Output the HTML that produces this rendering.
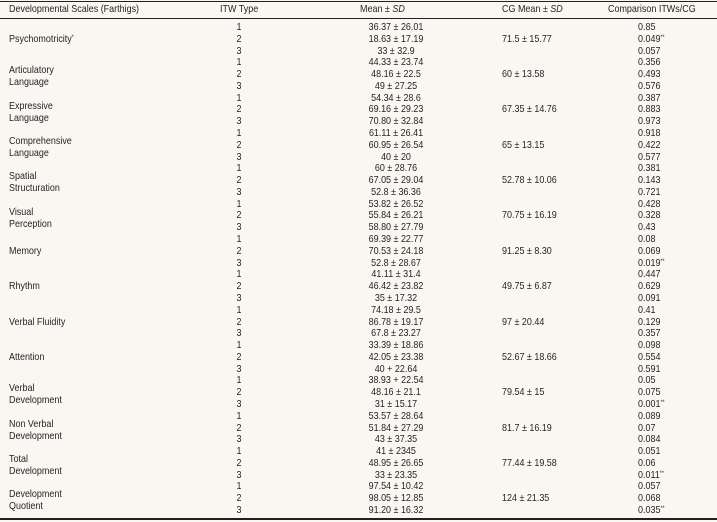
<!DOCTYPE html>
<html><head><meta charset="utf-8"><style>
*{margin:0;padding:0;box-sizing:border-box}
body{width:717px;height:522px;background:#f9f7f2;color:#231f20;font-family:"Liberation Sans Narrow","Liberation Sans",sans-serif;font-size:10.2px;position:relative;overflow:hidden}
.hl{position:absolute;left:0;width:717px;background:#231f20}
.t{position:absolute;white-space:nowrap;line-height:12px;transform:scaleX(.88);transform-origin:left center}
.c{transform:translateX(-50%) scaleX(.88);transform-origin:center center}
sup{font-size:6px;vertical-align:top;position:relative;top:-2px}
</style></head><body>
<div class="hl" style="top:1px;height:1px"></div>
<div class="hl" style="top:18px;height:1px"></div>
<div class="hl" style="top:518px;height:2px"></div>
<div class="t" style="left:9px;top:4px">Developmental Scales (Farthigs)</div>
<div class="t" style="left:220px;top:4px">ITW Type</div>
<div class="t" style="left:360px;top:4px">Mean ± <i>SD</i></div>
<div class="t" style="left:502px;top:4px">CG Mean ± <i>SD</i></div>
<div class="t" style="left:608px;top:4px">Comparison ITWs/CG</div>
<div id="rows"></div>
<script>
var g=[
["Psychomotricity<sup>*</sup>",["36.37 ± 26.01","18.63 ± 17.19","33 ± 32.9"],"71.5 ± 15.77",["0.85","0.049<sup>**</sup>","0.057"]],
["Articulatory<br>Language",["44.33 ± 23.74","48.16 ± 22.5","49 ± 27.25"],"60 ± 13.58",["0.356","0.493","0.576"]],
["Expressive<br>Language",["54.34 ± 28.6","69.16 ± 29.23","70.80 ± 32.84"],"67.35 ± 14.76",["0.387","0.883","0.973"]],
["Comprehensive<br>Language",["61.11 ± 26.41","60.95 ± 26.54","40 ± 20"],"65 ± 13.15",["0.918","0.422","0.577"]],
["Spatial<br>Structuration",["60 ± 28.76","67.05 ± 29.04","52.8 ± 36.36"],"52.78 ± 10.06",["0.381","0.143","0.721"]],
["Visual<br>Perception",["53.82 ± 26.52","55.84 ± 26.21","58.80 ± 27.79"],"70.75 ± 16.19",["0.428","0.328","0.43"]],
["Memory",["69.39 ± 22.77","70.53 ± 24.18","52.8 ± 28.67"],"91.25 ± 8.30",["0.08","0.069","0.019<sup>**</sup>"]],
["Rhythm",["41.11 ± 31.4","46.42 ± 23.82","35 ± 17.32"],"49.75 ± 6.87",["0.447","0.629","0.091"]],
["Verbal Fluidity",["74.18 ± 29.5","86.78 ± 19.17","67.8 ± 23.27"],"97 ± 20.44",["0.41","0.129","0.357"]],
["Attention",["33.39 ± 18.86","42.05 ± 23.38","40 + 22.64"],"52.67 ± 18.66",["0.098","0.554","0.591"]],
["Verbal<br>Development",["38.93 + 22.54","48.16 ± 21.1","31 ± 15.17"],"79.54 ± 15",["0.05","0.075","0.001<sup>**</sup>"]],
["Non Verbal<br>Development",["53.57 ± 28.64","51.84 ± 27.29","43 ± 37.35"],"81.7 ± 16.19",["0.089","0.07","0.084"]],
["Total<br>Development",["41 ± 2345","48.95 ± 26.65","33 ± 23.35"],"77.44 ± 19.58",["0.051","0.06","0.011<sup>**</sup>"]],
["Development<br>Quotient",["97.54 ± 10.42","98.05 ± 12.85","91.20 ± 16.32"],"124 ± 21.35",["0.057","0.068","0.035<sup>**</sup>"]]
];
var L=11.78,h="";
g.forEach(function(r,i){
 var top=22+i*3*L;
 var two=r[0].indexOf("<br>")>=0;
 h+='<div class="t" style="left:9px;top:'+(two?top+L/2+2:top+L)+'px">'+r[0]+'</div>';
 for(var k=0;k<3;k++){
  var y=top+k*L;
  h+='<div class="t c" style="left:239px;top:'+y+'px">'+(k+1)+'</div>';
  h+='<div class="t c" style="left:396px;top:'+y+'px">'+r[1][k]+'</div>';
  h+='<div class="t" style="left:638px;top:'+y+'px">'+r[3][k]+'</div>';
 }
 h+='<div class="t" style="left:502px;top:'+(top+L)+'px">'+r[2]+'</div>';
});
document.getElementById("rows").innerHTML=h;
</script>
</body></html>
